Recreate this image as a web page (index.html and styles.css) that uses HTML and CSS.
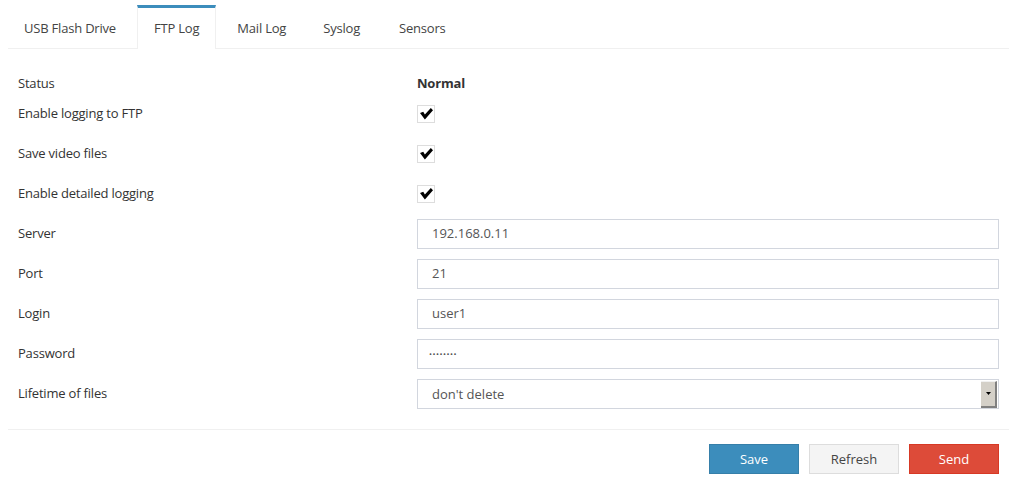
FILE: index.html
```html
<!DOCTYPE html>
<html lang="en">
<head>
  <meta charset="UTF-8" />
  <title>FTP Log</title>
  <link rel="stylesheet" href="styles.css">
</head>
<body>
  <div class="panel">
    <ul class="tabs">
      <li class="tab">USB Flash Drive</li>
      <li class="tab active">FTP Log</li>
      <li class="tab">Mail Log</li>
      <li class="tab">Syslog</li>
      <li class="tab">Sensors</li>
    </ul>

    <form class="form">
      <div class="row row-status">
        <label>Status</label>
        <div class="value"><b>Normal</b></div>
      </div>
      <div class="row">
        <label>Enable logging to FTP</label>
        <div class="value"><span class="check"><svg width="13" height="12" viewBox="0 0 12 11"><path d="M0 4.5 L3 3.5 L4.5 6 L10 0 L12 2 L4.5 10.5 Z" fill="#000"/></svg></span></div>
      </div>
      <div class="row">
        <label>Save video files</label>
        <div class="value"><span class="check"><svg width="13" height="12" viewBox="0 0 12 11"><path d="M0 4.5 L3 3.5 L4.5 6 L10 0 L12 2 L4.5 10.5 Z" fill="#000"/></svg></span></div>
      </div>
      <div class="row">
        <label>Enable detailed logging</label>
        <div class="value"><span class="check"><svg width="13" height="12" viewBox="0 0 12 11"><path d="M0 4.5 L3 3.5 L4.5 6 L10 0 L12 2 L4.5 10.5 Z" fill="#000"/></svg></span></div>
      </div>
      <div class="row">
        <label>Server</label>
        <div class="value"><div class="field">192.168.0.11</div></div>
      </div>
      <div class="row">
        <label>Port</label>
        <div class="value"><div class="field">21</div></div>
      </div>
      <div class="row">
        <label>Login</label>
        <div class="value"><div class="field">user1</div></div>
      </div>
      <div class="row">
        <label>Password</label>
        <div class="value"><div class="field dots">&bull;&bull;&bull;&bull;&bull;&bull;&bull;&bull;</div></div>
      </div>
      <div class="row">
        <label>Lifetime of files</label>
        <div class="value">
          <div class="field select">
            <span class="select-text">don't delete</span>
            <span class="select-btn"><svg width="5" height="3" viewBox="0 0 5 3"><path d="M0 0 H5 L2.5 3 Z" fill="#000"/></svg></span>
          </div>
        </div>
      </div>
    </form>

    <div class="footer">
      <button class="btn btn-primary">Save</button>
      <button class="btn btn-default">Refresh</button>
      <button class="btn btn-danger">Send</button>
    </div>
  </div>
</body>
</html>
```

FILE: styles.css
```css
body {
  margin: 0;
  background-color: white;
  font-family: "Open Sans", "Noto Sans", sans-serif;
  font-size: 13px;
  color: #333;
}
.panel {
  padding: 0 8px;
}
.tabs {
  list-style: none;
  margin: 0;
  padding: 5px 0 0 0;
  display: flex;
  border-bottom: 1px solid #f0f0f0;
}
.tab {
  height: 40px;
  line-height: 40px;
  padding: 0 16px;
  margin-right: 5px;
  border-top: 3px solid transparent;
  color: #444;
  letter-spacing: -0.2px;
}
.tab.active {
  border-top-color: #3c8dbc;
  border-left: 1px solid #f0f0f0;
  border-right: 1px solid #f0f0f0;
  margin-bottom: -1px;
  background-color: white;
  height: 41px;
}
.tab:nth-child(4) {
  margin-right: 7px;
}
.form {
  padding-top: 25px;
}
.row {
  display: grid;
  grid-template-columns: 409px 1fr;
  align-items: center;
  height: 30px;
  margin-bottom: 10px;
  padding-right: 10px;
}
.row-status {
  height: 20px;
  margin-bottom: 5px;
}
.row label {
  padding-left: 10px;
  padding-bottom: 3px;
  color: #333;
  letter-spacing: -0.2px;
}
.value b {
  display: block;
  padding-bottom: 3px;
  font-weight: bold;
  letter-spacing: -0.2px;
}
.check {
  width: 16px;
  height: 16px;
  border: 1px solid #ddd;
  display: flex;
  align-items: center;
  justify-content: center;
}
.field {
  height: 28px;
  border: 1px solid #d2d6de;
  line-height: 27px;
  padding: 0 14px;
  color: #555;
}
.dots {
  font-size: 8px;
  letter-spacing: 0.5px;
  padding-left: 11px;
}
.select {
  display: flex;
  justify-content: space-between;
  align-items: center;
  padding-right: 1px;
}
.select-btn {
  width: 14px;
  height: 24px;
  background-color: #d4d0c8;
  border-right: 2px solid #808080;
  border-bottom: 2px solid #808080;
  border-top: 1px solid #f0f0f0;
  display: flex;
  align-items: center;
  justify-content: center;
}
.footer {
  margin-top: 20px;
  border-top: 1px solid #f0f0f0;
  padding: 14px 10px 0 0;
  display: flex;
  justify-content: flex-end;
  gap: 10px;
}
.btn {
  width: 90px;
  height: 30px;
  font-family: inherit;
  font-size: 13px;
  border: 1px solid;
  cursor: pointer;
}
.btn-primary {
  background-color: #3c8dbc;
  border-color: #367fa9;
  color: white;
}
.btn-default {
  background-color: #f4f4f4;
  border-color: #ddd;
  color: #444;
}
.btn-danger {
  background-color: #dd4b39;
  border-color: #d73925;
  color: white;
}
```
